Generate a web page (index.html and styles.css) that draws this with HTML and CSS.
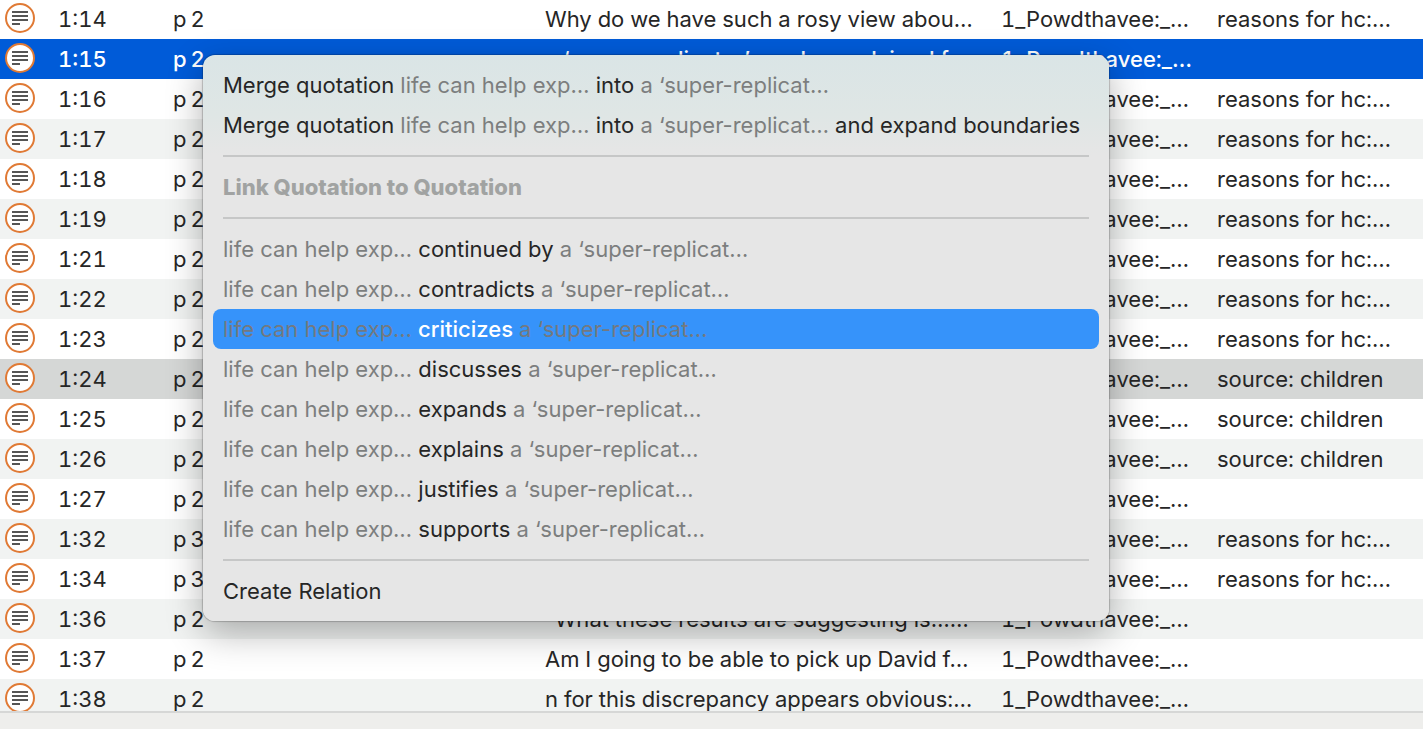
FILE: index.html
```html
<!DOCTYPE html>
<html lang="en">
<head>
    <meta charset="UTF-8">
    <meta name="viewport" content="width=device-width, initial-scale=1.0">
    <title>Quotation Manager</title>
    <link rel="stylesheet" href="styles.css">
</head>
<body>
    <svg class="symbols" aria-hidden="true">
        <symbol id="quote-icon" viewBox="0 0 30 30">
            <circle cx="15" cy="15" r="14" fill="#fff" stroke="#e07a35" stroke-width="2"/>
            <path d="M7 9h16M7 13h16M7 17h16M7 21h8" stroke="#555" stroke-width="2"/>
        </symbol>
    </svg>

    <main class="quotation-list">
        <table>
            <colgroup>
                <col class="col-icon">
                <col class="col-id">
                <col class="col-page">
                <col class="col-quote">
                <col class="col-document">
                <col class="col-codes">
            </colgroup>
            <tbody id="rows"></tbody>
        </table>
    </main>
    <footer class="status-bar"></footer>

    <div class="context-menu" id="menu">
        <button type="button">Merge quotation <span>life can help exp…</span> into <span>a ‘super-replicat…</span></button>
        <button type="button">Merge quotation <span>life can help exp…</span> into <span>a ‘super-replicat…</span> and expand boundaries</button>
        <hr>
        <h2>Link Quotation to Quotation</h2>
        <hr>
        <button type="button"><span>life can help exp…</span> continued by <span>a ‘super-replicat…</span></button>
        <button type="button"><span>life can help exp…</span> contradicts <span>a ‘super-replicat…</span></button>
        <button type="button" class="active"><span>life can help exp…</span> criticizes <span>a ‘super-replicat…</span></button>
        <button type="button"><span>life can help exp…</span> discusses <span>a ‘super-replicat…</span></button>
        <button type="button"><span>life can help exp…</span> expands <span>a ‘super-replicat…</span></button>
        <button type="button"><span>life can help exp…</span> explains <span>a ‘super-replicat…</span></button>
        <button type="button"><span>life can help exp…</span> justifies <span>a ‘super-replicat…</span></button>
        <button type="button"><span>life can help exp…</span> supports <span>a ‘super-replicat…</span></button>
        <hr>
        <button type="button">Create Relation</button>
    </div>

    <script src="script.js"></script>
</body>
</html>
```
FILE: styles.css
```css
* {
    box-sizing: border-box;
}
body {
    display: flex;
    flex-direction: column;
    height: 100vh;
    margin: 0;
    overflow: hidden;
    background-color: #eeeeec;
    color: #262626;
    font-family: Inter, "Liberation Sans", sans-serif;
    font-size: 22px;
    line-height: 40px;
}
.symbols {
    position: absolute;
    width: 0;
    height: 0;
}

/* quotation table */
.quotation-list {
    flex: 1;
    min-height: 0;
    overflow: hidden;
    background-color: #fff;
}
table {
    width: 100%;
    margin-top: -1px;
    table-layout: fixed;
    border-collapse: collapse;
    font-variant-numeric: tabular-nums;
}
.col-icon { width: 58px; }
.col-id { width: 115px; }
.col-page { width: 372px; }
.col-quote { width: 456px; }
.col-document { width: 216px; }
td {
    height: 40px;
    padding: 0;
    overflow: hidden;
    white-space: nowrap;
}
td svg {
    display: block;
    width: 30px;
    height: 30px;
    margin-left: 5px;
    margin-bottom: 2px;
}
tr:nth-child(even) {
    background-color: #f1f3f2;
}
tr.selected {
    background-color: #005bd8;
    color: #fff;
    font-weight: 500;
}
tr.target {
    background-color: #d5d7d6;
}
.status-bar {
    height: 18px;
    border-top: 2px solid #d6d7d6;
}

/* context menu */
.context-menu {
    position: absolute;
    top: 55px;
    left: 203px;
    width: 906px;
    padding: 10px;
    border-radius: 12px;
    background: linear-gradient(#dae5e6, #dfe6e5 60px, #e6e6e6 100px);
    box-shadow: 0 0 1px 1px rgba(0, 0, 0, 0.2), 0 12px 36px rgba(0, 0, 0, 0.3);
}
.context-menu button {
    display: block;
    width: 100%;
    height: 40px;
    padding: 0 10px;
    border: none;
    border-radius: 8px;
    background: none;
    color: #262626;
    font: inherit;
    text-align: left;
    white-space: nowrap;
}
.context-menu button span {
    color: #7c7e7e;
}
.context-menu button.active {
    background-color: #3693fa;
    color: #fff;
    font-weight: 500;
}
.context-menu button.active span {
    color: #74797f;
    font-weight: 400;
}
.context-menu h2 {
    margin: 0;
    padding: 0 10px;
    color: #a1a3a2;
    font-size: 22px;
    font-weight: 800;
}
.context-menu hr {
    height: 2px;
    margin: 10px;
    border: none;
    background-color: #c6c7c7;
}
```
FILE: script.js
```js
const quotations = [
    { id: '1:14', page: 2, text: 'Why do we have such a rosy view abou…', codes: 'reasons for hc:…' },
    { id: '1:15', page: 2, text: 'a ‘super-replicator’ can be explained f…', codes: '', state: 'selected' },
    { id: '1:16', page: 2, text: '', codes: 'reasons for hc:…' },
    { id: '1:17', page: 2, text: '', codes: 'reasons for hc:…' },
    { id: '1:18', page: 2, text: '', codes: 'reasons for hc:…' },
    { id: '1:19', page: 2, text: '', codes: 'reasons for hc:…' },
    { id: '1:21', page: 2, text: '', codes: 'reasons for hc:…' },
    { id: '1:22', page: 2, text: '', codes: 'reasons for hc:…' },
    { id: '1:23', page: 2, text: '', codes: 'reasons for hc:…' },
    { id: '1:24', page: 2, text: '', codes: 'source: children', state: 'target' },
    { id: '1:25', page: 2, text: '', codes: 'source: children' },
    { id: '1:26', page: 2, text: '', codes: 'source: children' },
    { id: '1:27', page: 2, text: '', codes: '' },
    { id: '1:32', page: 3, text: '', codes: 'reasons for hc:…' },
    { id: '1:34', page: 3, text: '', codes: 'reasons for hc:…' },
    { id: '1:36', page: 2, text: '“What these results are suggesting is……', codes: '' },
    { id: '1:37', page: 2, text: 'Am I going to be able to pick up David f…', codes: '' },
    { id: '1:38', page: 2, text: 'n for this discrepancy appears obvious:…', codes: '' }
];

document.getElementById('rows').innerHTML = quotations.map(q => `
    <tr class="${q.state || ''}">
        <td><svg><use href="#quote-icon"/></svg></td>
        <td>${q.id}</td>
        <td>p\u2009${q.page}</td>
        <td>${q.text}</td>
        <td>1_Powdthavee:_…</td>
        <td>${q.codes}</td>
    </tr>`).join('');
```
